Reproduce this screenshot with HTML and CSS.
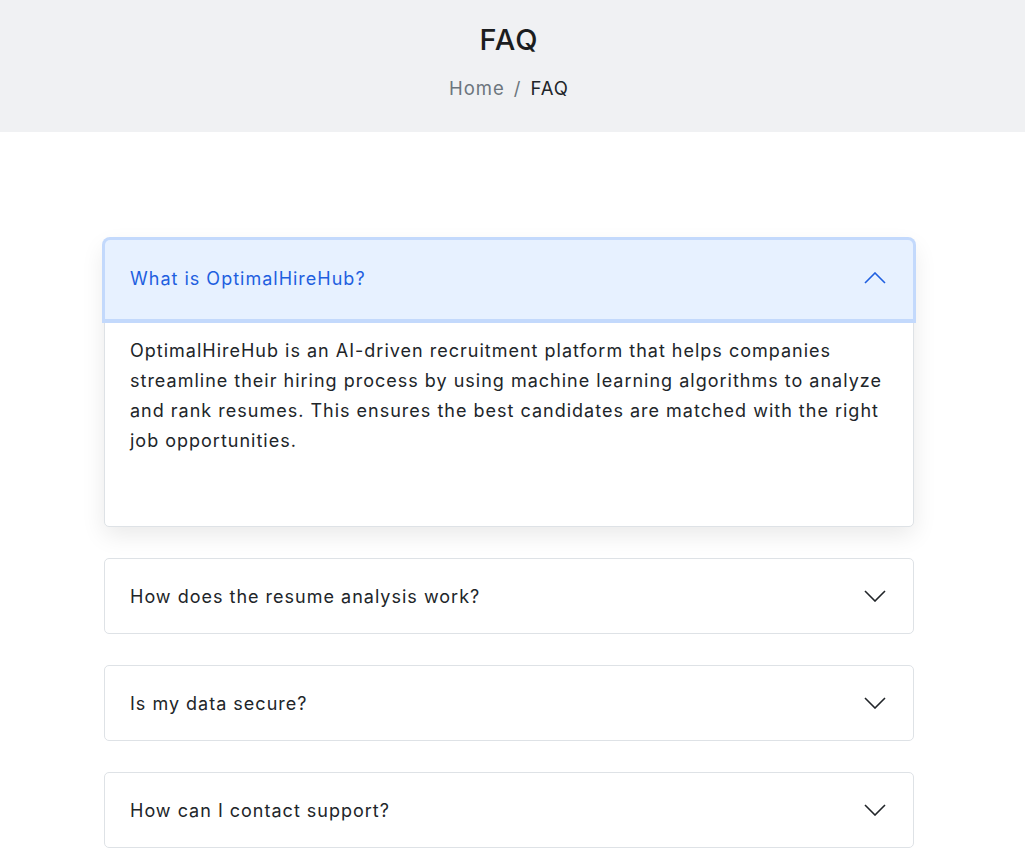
FILE: index.html
```html
<!DOCTYPE html>
<html lang="en">
<head>
<meta charset="utf-8">
<title>FAQ</title>
<link rel="stylesheet" href="styles.css">
</head>
<body>
<div class="page">
<header class="page-header">
  <h1 class="page-title">FAQ</h1>
  <nav class="breadcrumb"><a class="crumb-link" href="#">Home</a><span class="sep">/</span><span class="crumb-current">FAQ</span></nav>
</header>
<main class="faq">
  <div class="item open">
    <button class="q q-open">What is OptimalHireHub?
      <svg class="chev" viewBox="0 0 22 12" width="22" height="12"><path d="M1 11 L11 1 L21 11" fill="none" stroke="currentColor" stroke-width="1.6"/></svg>
    </button>
    <div class="answer">
      <p>OptimalHireHub is an AI-driven recruitment platform that helps companies streamline their hiring process by using machine learning algorithms to analyze and rank resumes. This ensures the best candidates are matched with the right job opportunities.</p>
    </div>
  </div>
  <div class="item">
    <button class="q">How does the resume analysis work?
      <svg class="chev" viewBox="0 0 22 12" width="22" height="12"><path d="M1 1 L11 11 L21 1" fill="none" stroke="currentColor" stroke-width="1.6"/></svg>
    </button>
  </div>
  <div class="item">
    <button class="q">Is my data secure?
      <svg class="chev" viewBox="0 0 22 12" width="22" height="12"><path d="M1 1 L11 11 L21 1" fill="none" stroke="currentColor" stroke-width="1.6"/></svg>
    </button>
  </div>
  <div class="item">
    <button class="q">How can I contact support?
      <svg class="chev" viewBox="0 0 22 12" width="22" height="12"><path d="M1 1 L11 11 L21 1" fill="none" stroke="currentColor" stroke-width="1.6"/></svg>
    </button>
  </div>
</main>
</div>
</body>
</html>
```
FILE: styles.css
```css
* { box-sizing: border-box; }
html, body { margin: 0; padding: 0; }
body {
  font-family: Inter, "Noto Sans", sans-serif;
  color: #212529;
  background: #fff;
  letter-spacing: 1px;
}
.page { padding-right: 7px; }
.page-header {
  background: #f0f1f3;
  height: 132px;
  margin-right: -7px;
  padding-right: 7px;
  display: flex;
  flex-direction: column;
  align-items: center;
  padding-top: 22px;
}
.page-title {
  margin: 0;
  font-size: 29px;
  font-weight: 500;
  line-height: 36px;
  color: #1b1d20;
}
.breadcrumb {
  margin-top: 17px;
  font-size: 18.5px;
  line-height: 26px;
  display: flex;
}
.crumb-link { color: #6c757d; text-decoration: none; }
.sep { color: #6c757d; padding: 0 9px; }
.crumb-current { color: #212529; }
.faq {
  width: 810px;
  margin: 108px 0 0 104px;
  display: flex;
  flex-direction: column;
  gap: 31px;
}
.item {
  border: 1px solid #dee2e6;
  border-radius: 5px;
  background: #fff;
}
.item.open {
  box-shadow: 0 8px 24px rgba(0, 0, 0, 0.09);
}
.q {
  width: 100%;
  height: 74px;
  border: 0;
  background: transparent;
  display: flex;
  align-items: center;
  justify-content: space-between;
  padding: 0 27px 0 25px;
  font-family: inherit;
  letter-spacing: 1px;
  font-size: 18px;
  color: #212529;
  text-align: left;
  cursor: pointer;
  border-radius: 5px;
}
.q-open {
  height: 80px;
  margin: -1px 0 0 0;
  padding-bottom: 3px;
  background: #e7f1ff;
  color: #1f5fe0;
  border-radius: 5px 5px 0 0;
  box-shadow: 0 0 0 3px #c3d9fc;
  border-bottom: 1px solid #c3d9fc;
}
.chev { flex: none; color: #212529; }
.q-open .chev { color: #1f5fe0; }
.answer {
  padding: 16px 24px 54px 25px;
}
.answer p {
  margin: 0 0 16px;
  font-size: 18px;
  line-height: 30px;
  color: #212529;
}
```
